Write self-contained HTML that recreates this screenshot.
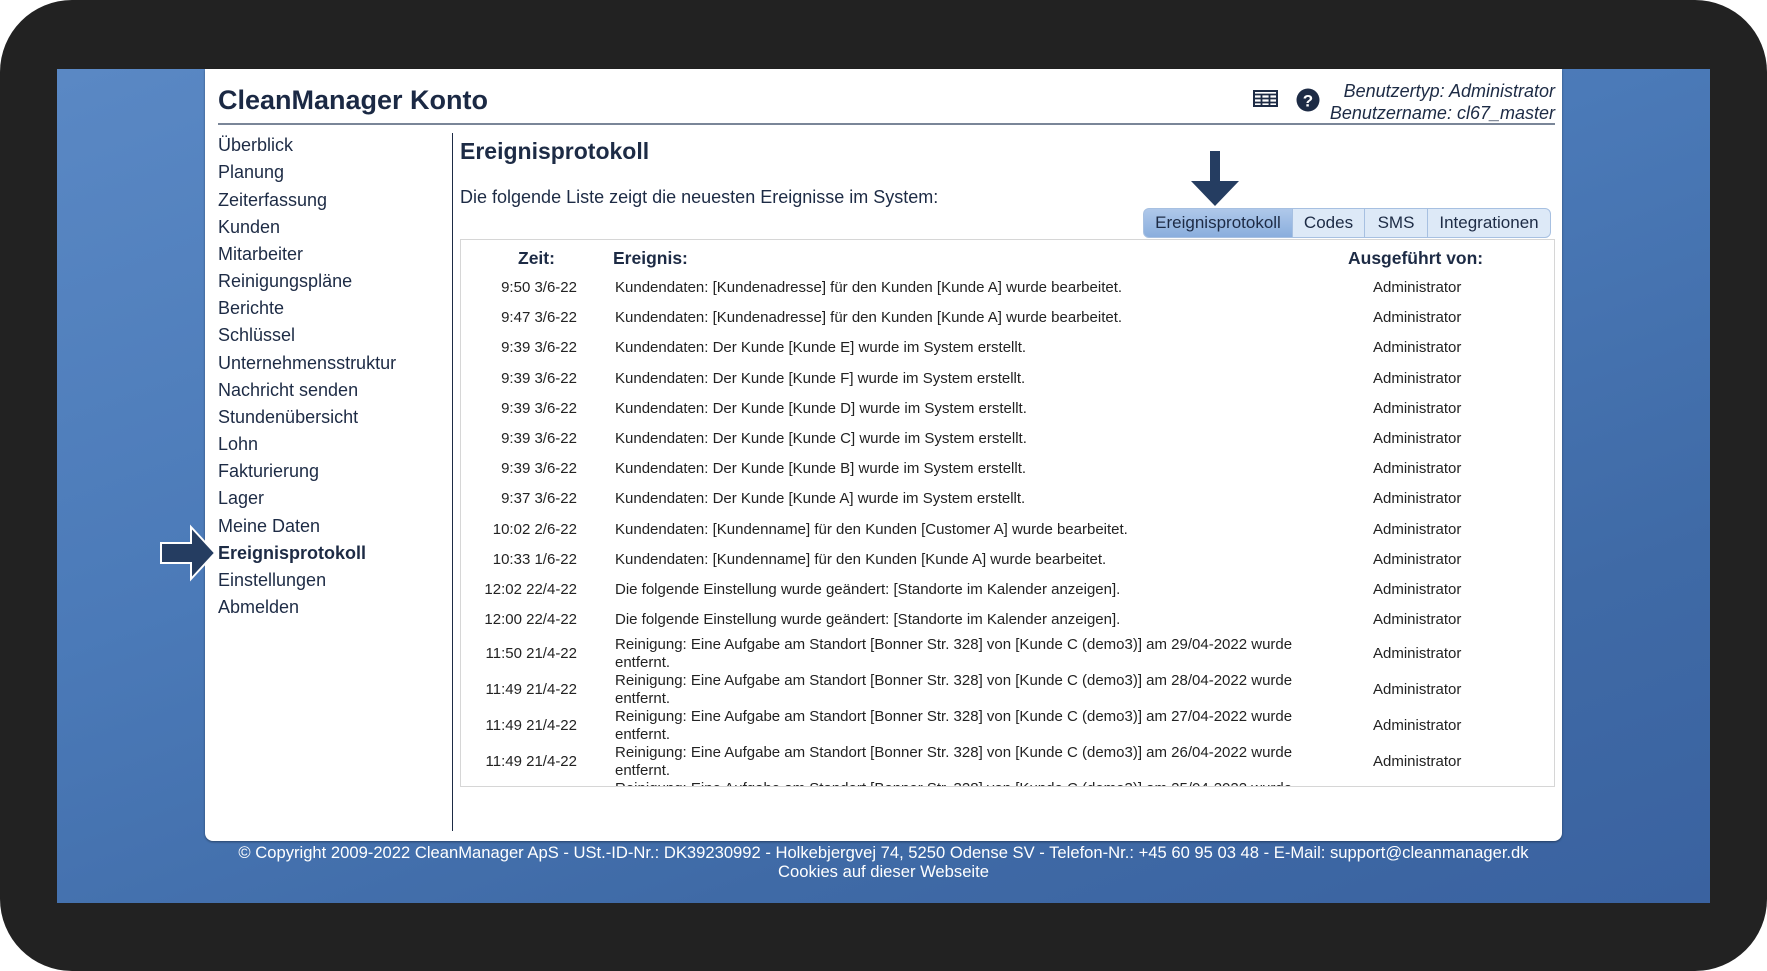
<!DOCTYPE html>
<html><head><meta charset="utf-8"><style>
*{margin:0;padding:0;box-sizing:border-box}
body{width:1767px;height:971px;background:#fff;position:relative;overflow:hidden;font-family:"Liberation Sans",sans-serif;color:#1d2b45}
.frame{position:absolute;left:0;top:0;width:1767px;height:971px;background:#222;border-radius:72px}
.blue{position:absolute;left:57px;top:69px;width:1653px;height:834px;background:linear-gradient(160deg,#5a88c4 0%,#4b7ab8 40%,#3f6aa6 75%,#3a62a0 100%)}
.panel{position:absolute;left:205px;top:69px;width:1357px;height:772px;background:#fff;border-radius:0 0 8px 8px;box-shadow:0 1px 2px rgba(0,0,0,.4)}
.a{position:absolute}
.nav div{position:absolute;left:218px;font-size:18px;color:#1d2b45;line-height:20px}
.row{position:absolute;left:0;width:1095px;font-size:15px;color:#222}
.row .t{position:absolute;right:979px;white-space:nowrap}
.row .e{position:absolute;left:154px;line-height:18px;white-space:nowrap}
.row .u{position:absolute;left:912px}
.tab{position:absolute;top:208px;height:30px;font-size:17px;line-height:28px;text-align:center;background:#dde9f7;border:1px solid #a7c0e1;color:#1d2b45}
</style></head><body>
<div class="frame"></div>
<div class="blue"></div>
<div class="panel"></div>
<div class="a" style="left:218px;top:85px;font-size:27px;font-weight:bold;color:#1b2944">CleanManager Konto</div>
<div class="a" style="left:218px;top:123px;width:1337px;height:2px;background:#7a8698"></div>
<svg class="a" style="left:1253px;top:90px" width="25" height="17" viewBox="0 0 25 17"><rect x="1" y="1" width="23" height="15" fill="none" stroke="#1d2b45" stroke-width="2"/><path d="M1 4.5h23M1 8.5h23M1 12.5h23M8.5 4v12M16.5 4v12" stroke="#1d2b45" stroke-width="1.8"/></svg>
<svg class="a" style="left:1296px;top:88px" width="24" height="24" viewBox="0 0 24 24"><circle cx="12" cy="12" r="11.5" fill="#1d2b45"/><text x="12" y="18.5" font-family="Liberation Sans" font-weight="bold" font-size="17" fill="#fff" text-anchor="middle">?</text></svg>
<div class="a" style="right:212px;top:80px;font-size:18px;font-style:italic;text-align:right;line-height:22px">Benutzertyp: Administrator<br>Benutzername: cl67_master</div>
<div class="a" style="left:452px;top:133px;width:1px;height:698px;background:#1d2b45"></div>
<div class="nav">
<div style="top:135px">Überblick</div><div style="top:162px">Planung</div><div style="top:190px">Zeiterfassung</div><div style="top:217px">Kunden</div><div style="top:244px">Mitarbeiter</div><div style="top:271px">Reinigungspläne</div><div style="top:298px">Berichte</div><div style="top:325px">Schlüssel</div><div style="top:353px">Unternehmensstruktur</div><div style="top:380px">Nachricht senden</div><div style="top:407px">Stundenübersicht</div><div style="top:434px">Lohn</div><div style="top:461px">Fakturierung</div><div style="top:488px">Lager</div><div style="top:516px">Meine Daten</div><div style="top:543px;font-weight:bold">Ereignisprotokoll</div><div style="top:570px">Einstellungen</div><div style="top:597px">Abmelden</div>
</div>
<svg class="a" style="left:158px;top:524px" width="60" height="60" viewBox="0 0 60 60"><path d="M3 19H33V3L57 29L33 55V39H3Z" fill="#253d61" stroke="#fff" stroke-width="2"/></svg>
<div class="a" style="left:460px;top:138px;font-size:23px;font-weight:bold">Ereignisprotokoll</div>
<div class="a" style="left:460px;top:187px;font-size:18px">Die folgende Liste zeigt die neuesten Ereignisse im System:</div>
<svg class="a" style="left:1190px;top:151px" width="50" height="56" viewBox="0 0 50 56"><path d="M20 0H30V30H49L25 55L1 30H20Z" fill="#253d61"/></svg>
<div class="tab" style="left:1143px;width:150px;border-radius:6px 0 0 6px;background:linear-gradient(#afc8ea,#8aaedd)">Ereignisprotokoll</div>
<div class="tab" style="left:1292px;width:73px">Codes</div>
<div class="tab" style="left:1364px;width:64px">SMS</div>
<div class="tab" style="left:1427px;width:124px;border-radius:0 6px 6px 0">Integrationen</div>
<div class="a" style="left:460px;top:239px;width:1095px;height:548px;border:1px solid #d6d6d6;overflow:hidden">
<div class="a" style="top:8px;left:57px;font-size:17.5px;font-weight:bold">Zeit:</div>
<div class="a" style="top:8px;left:152px;font-size:17.5px;font-weight:bold">Ereignis:</div>
<div class="a" style="top:8px;left:887px;font-size:17.5px;font-weight:bold">Ausgeführt von:</div>
<div class="row" style="top:39px"><span class="t">9:50 3/6-22</span><span class="e">Kundendaten: [Kundenadresse] für den Kunden [Kunde A] wurde bearbeitet.</span><span class="u">Administrator</span></div>
<div class="row" style="top:69px"><span class="t">9:47 3/6-22</span><span class="e">Kundendaten: [Kundenadresse] für den Kunden [Kunde A] wurde bearbeitet.</span><span class="u">Administrator</span></div>
<div class="row" style="top:99px"><span class="t">9:39 3/6-22</span><span class="e">Kundendaten: Der Kunde [Kunde E] wurde im System erstellt.</span><span class="u">Administrator</span></div>
<div class="row" style="top:130px"><span class="t">9:39 3/6-22</span><span class="e">Kundendaten: Der Kunde [Kunde F] wurde im System erstellt.</span><span class="u">Administrator</span></div>
<div class="row" style="top:160px"><span class="t">9:39 3/6-22</span><span class="e">Kundendaten: Der Kunde [Kunde D] wurde im System erstellt.</span><span class="u">Administrator</span></div>
<div class="row" style="top:190px"><span class="t">9:39 3/6-22</span><span class="e">Kundendaten: Der Kunde [Kunde C] wurde im System erstellt.</span><span class="u">Administrator</span></div>
<div class="row" style="top:220px"><span class="t">9:39 3/6-22</span><span class="e">Kundendaten: Der Kunde [Kunde B] wurde im System erstellt.</span><span class="u">Administrator</span></div>
<div class="row" style="top:250px"><span class="t">9:37 3/6-22</span><span class="e">Kundendaten: Der Kunde [Kunde A] wurde im System erstellt.</span><span class="u">Administrator</span></div>
<div class="row" style="top:281px"><span class="t">10:02 2/6-22</span><span class="e">Kundendaten: [Kundenname] für den Kunden [Customer A] wurde bearbeitet.</span><span class="u">Administrator</span></div>
<div class="row" style="top:311px"><span class="t">10:33 1/6-22</span><span class="e">Kundendaten: [Kundenname] für den Kunden [Kunde A] wurde bearbeitet.</span><span class="u">Administrator</span></div>
<div class="row" style="top:341px"><span class="t">12:02 22/4-22</span><span class="e">Die folgende Einstellung wurde geändert: [Standorte im Kalender anzeigen].</span><span class="u">Administrator</span></div>
<div class="row" style="top:371px"><span class="t">12:00 22/4-22</span><span class="e">Die folgende Einstellung wurde geändert: [Standorte im Kalender anzeigen].</span><span class="u">Administrator</span></div>
<div class="row" style="top:396px"><span class="t" style="top:9px">11:50 21/4-22</span><span class="e">Reinigung: Eine Aufgabe am Standort [Bonner Str. 328] von [Kunde C (demo3)] am 29/04-2022 wurde<br>entfernt.</span><span class="u" style="top:9px">Administrator</span></div>
<div class="row" style="top:432px"><span class="t" style="top:9px">11:49 21/4-22</span><span class="e">Reinigung: Eine Aufgabe am Standort [Bonner Str. 328] von [Kunde C (demo3)] am 28/04-2022 wurde<br>entfernt.</span><span class="u" style="top:9px">Administrator</span></div>
<div class="row" style="top:468px"><span class="t" style="top:9px">11:49 21/4-22</span><span class="e">Reinigung: Eine Aufgabe am Standort [Bonner Str. 328] von [Kunde C (demo3)] am 27/04-2022 wurde<br>entfernt.</span><span class="u" style="top:9px">Administrator</span></div>
<div class="row" style="top:504px"><span class="t" style="top:9px">11:49 21/4-22</span><span class="e">Reinigung: Eine Aufgabe am Standort [Bonner Str. 328] von [Kunde C (demo3)] am 26/04-2022 wurde<br>entfernt.</span><span class="u" style="top:9px">Administrator</span></div>
<div class="row" style="top:540px"><span class="e">Reinigung: Eine Aufgabe am Standort [Bonner Str. 328] von [Kunde C (demo3)] am 25/04-2022 wurde</span></div>
</div>
<div class="a" style="left:0;width:1767px;top:843px;text-align:center;color:#fff;font-size:16.6px;line-height:19px">© Copyright 2009-2022 CleanManager ApS - USt.-ID-Nr.: DK39230992 - Holkebjergvej 74, 5250 Odense SV - Telefon-Nr.: +45 60 95 03 48 - E-Mail: support@cleanmanager.dk<br>Cookies auf dieser Webseite</div>
</body></html>
